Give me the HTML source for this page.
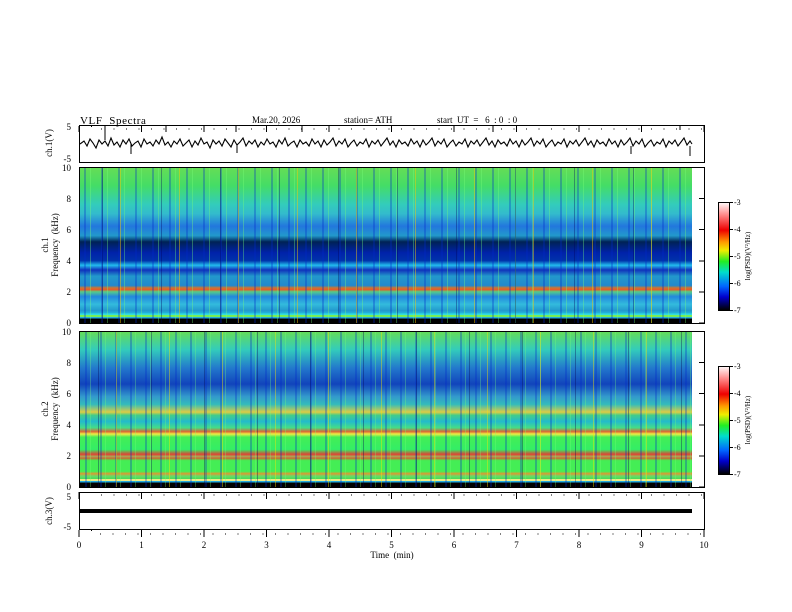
<!DOCTYPE html>
<html><head><meta charset="utf-8"><style>
body{margin:0;width:792px;height:612px;background:#fff;position:relative;overflow:hidden;font-family:"Liberation Serif",serif;}
.sp{position:absolute;left:79px;width:613px;}
#s1{top:167px;height:156px;
background:
repeating-linear-gradient(90deg,transparent 0 23px,rgba(0,0,90,.35) 23px 24px,transparent 24px 41px,rgba(255,200,0,.45) 41px 42px,transparent 42px 59px),
repeating-linear-gradient(90deg,transparent 0 5px,rgba(0,40,200,.3) 5px 7px,transparent 7px 11px,rgba(120,255,120,.35) 11px 12px,transparent 12px 17px),
linear-gradient(180deg,transparent 0 94%,#3dd 94% 95%,#7e5 95% 96%,#2ad 96% 97%,#000 97% 100%),
linear-gradient(180deg,#6d5 0%,#4d6 12%,#3cb 24%,#3bc 30%,#27d 38%,#29c 44%,#025 48%,#02a 55%,#03a 60%,#2be 63%,#13b 66%,#29c 70%,#28c 76%,#c73 77.5%,#e52 78.5%,#5c8 80%,#28d 83%,#3bd 88%,#29c 92%,#2bd 94%);}
#s2{top:331px;height:156px;
background:
repeating-linear-gradient(90deg,transparent 0 19px,rgba(0,0,80,.35) 19px 20px,transparent 20px 37px,rgba(255,230,0,.4) 37px 38px,transparent 38px 53px),
repeating-linear-gradient(90deg,transparent 0 6px,rgba(0,40,200,.3) 6px 8px,transparent 8px 11px,rgba(120,255,120,.3) 11px 12px,transparent 12px 15px),
linear-gradient(180deg,transparent 0 95%,#ee8 95% 96%,#2ad 96% 97%,#000 97% 100%),
linear-gradient(180deg,#6d5 0%,#3cb 12%,#27c 24%,#14b 34%,#39c 42%,#3bb 47%,#dc4 52%,#4c8 54%,#2bc 58%,#4d8 62%,#d63 64.5%,#ee4 66%,#4e5 68%,#3e6 76%,#d43 79%,#aa5 80.5%,#c63 81.5%,#4e5 83%,#4e5 90%,#d93 91.5%,#6d6 93%,#4d5 95%);}
.cb{position:absolute;left:718px;width:11px;height:108px;background:linear-gradient(180deg,#fff 0%,#f88 12%,#e00 26%,#f90 37%,#ee0 45%,#2e2 55%,#0dc 65%,#06f 78%,#00c 88%,#000 100%);}
text{white-space:pre}
</style></head><body>
<div class="sp" id="s1"></div>
<div class="sp" id="s2"></div>
<div class="cb" style="top:202px"></div>
<div class="cb" style="top:366px"></div>
<svg width="792" height="612" style="position:absolute;left:0;top:0" font-family="Liberation Serif, serif" font-size="9" xml:space="preserve">
<g fill="none" stroke="#000" stroke-width="1">
<rect x="79.5" y="125.5" width="625" height="37"/>
<rect x="79.5" y="167.5" width="625" height="156"/>
<rect x="79.5" y="331.5" width="625" height="156"/>
<rect x="79.5" y="492.5" width="625" height="37"/>
<rect x="718.5" y="202.5" width="11" height="108"/>
<rect x="718.5" y="366.5" width="11" height="108"/>
</g>
<g stroke="#000" stroke-width="1">
<path d="M79 530v7M141.5 530v7M204 530v7M266.5 530v7M329 530v7M391.5 530v7M454 530v7M516.5 530v7M579 530v7M641.5 530v7M704 530v7"/>
<path d="M79 126v6M141.5 126v6M204 126v6M266.5 126v6M329 126v6M391.5 126v6M454 126v6M516.5 126v6M579 126v6M641.5 126v6M704 126v6" />
<path d="M79 492v7M141.5 492v7M204 492v7M266.5 492v7M329 492v7M391.5 492v7M454 492v7M516.5 492v7M579 492v7M641.5 492v7M704 492v7" />
<path d="M704 167.5h-5M704 198.5h-5M704 229.5h-5M704 261h-5M704 292h-5M704 323h-5M704 331.5h-5M704 362.5h-5M704 393.5h-5M704 425h-5M704 456h-5M704 487h-5"/>
<path d="M729 202.5h4M729 229.5h4M729 256.5h4M729 283.5h4M729 310.5h4M729 366.5h4M729 393.5h4M729 420.5h4M729 447.5h4M729 474.5h4"/>
</g>
<path stroke="#000" stroke-width="1" stroke-dasharray="1 11.5" d="M91.5 530v4H704M91.5 126v3H704M91.5 492v3H704" fill="none"/>
<polyline fill="none" stroke="#000" stroke-width="1.1" points="80,144 84,141 87,146 90,139 93,143 96,148 99,140 102,144 105,141 108,146 111,138 114,145 117,142 120,147 123,140 126,144 129,139 132,146 135,143 138,141 141,147 144,139 147,144 150,142 153,146 156,140 159,144 162,137 165,145 168,142 171,147 174,141 177,144 180,139 183,146 186,143 189,140 192,147 195,141 198,145 201,138 204,144 207,142 210,148 213,140 216,144 219,141 222,146 225,139 228,143 231,147 234,140 237,145 240,142 243,138 246,146 249,141 252,144 255,140 258,147 261,142 264,145 267,139 270,144 273,142 276,147 279,140 282,144 285,138 288,146 291,143 294,141 297,147 300,140 303,144 306,142 309,146 312,139 315,144 318,141 321,147 324,140 327,145 330,142 333,138 336,146 339,141 342,144 345,139 348,147 351,143 354,140 357,146 360,142 363,144 366,139 369,147 372,141 375,144 378,140 381,146 384,142 387,138 390,145 393,141 396,147 399,140 402,144 405,142 408,146 411,139 414,144 417,141 420,147 423,140 426,145 429,142 432,138 435,146 438,141 441,144 444,139 447,147 450,143 453,140 456,146 459,142 462,144 465,139 468,147 471,141 474,144 477,140 480,146 483,142 486,138 489,145 492,141 495,147 498,140 501,144 504,142 507,146 510,139 513,144 516,141 519,147 522,140 525,145 528,142 531,138 534,146 537,141 540,144 543,139 546,147 549,143 552,140 555,146 558,142 561,144 564,139 567,147 570,141 573,144 576,140 579,146 582,142 585,138 588,145 591,141 594,147 597,140 600,144 603,142 606,146 609,139 612,144 615,141 618,147 621,140 624,145 627,142 630,138 633,146 636,141 639,144 642,139 645,147 648,143 651,140 654,146 657,142 660,144 663,139 666,147 669,141 672,144 675,140 678,146 681,142 684,138 687,145 690,141 692,144"/>
<path stroke="#000" stroke-width="1" d="M105 140v-15M166 132v-7M236 132v-7M302 132v-7M493 132v-7M680 130v-5M131 144v10M237 144v9M631 146v8M690 146v10"/>
<rect x="79" y="509" width="613" height="4" fill="#000"/>
<text x="80" y="124" font-size="11" letter-spacing="0.6">VLF  Spectra</text>
<text x="252" y="123">Mar.20, 2026</text>
<text x="344" y="123">station= ATH</text>
<text x="437" y="123">start  UT  =   6  : 0  : 0</text>
<g text-anchor="end">
<text x="71" y="130">5</text><text x="71" y="162">-5</text>
<text x="71" y="171">10</text><text x="71" y="202">8</text><text x="71" y="233">6</text><text x="71" y="264">4</text><text x="71" y="295">2</text><text x="71" y="326">0</text>
<text x="71" y="335">10</text><text x="71" y="366">8</text><text x="71" y="397">6</text><text x="71" y="428">4</text><text x="71" y="459">2</text><text x="71" y="490">0</text>
<text x="71" y="500">5</text><text x="71" y="530">-5</text>
</g>
<g text-anchor="middle">
<text x="79" y="548">0</text><text x="141.5" y="548">1</text><text x="204" y="548">2</text><text x="266.5" y="548">3</text><text x="329" y="548">4</text><text x="391.5" y="548">5</text><text x="454" y="548">6</text><text x="516.5" y="548">7</text><text x="579" y="548">8</text><text x="641.5" y="548">9</text><text x="704" y="548">10</text>
<text x="392" y="558">Time  (min)</text>
</g>
<g font-size="8"><text x="734" y="205">-3</text><text x="734" y="232">-4</text><text x="734" y="259">-5</text><text x="734" y="286">-6</text><text x="734" y="313">-7</text>
<text x="734" y="369">-3</text><text x="734" y="396">-4</text><text x="734" y="423">-5</text><text x="734" y="450">-6</text><text x="734" y="477">-7</text></g>
<g text-anchor="middle">
<text transform="translate(52,143) rotate(-90)">ch.1(V)</text>
<text transform="translate(48,245) rotate(-90)">ch.1</text>
<text transform="translate(58,245) rotate(-90)">Frequency  (kHz)</text>
<text transform="translate(48,409) rotate(-90)">ch.2</text>
<text transform="translate(58,409) rotate(-90)">Frequency  (kHz)</text>
<text transform="translate(52,511) rotate(-90)">ch.3(V)</text>
<text font-size="7" transform="translate(750,256) rotate(-90)">log(PSD)(V²/Hz)</text>
<text font-size="7" transform="translate(750,420) rotate(-90)">log(PSD)(V²/Hz)</text>
</g>
</svg>
</body></html>
